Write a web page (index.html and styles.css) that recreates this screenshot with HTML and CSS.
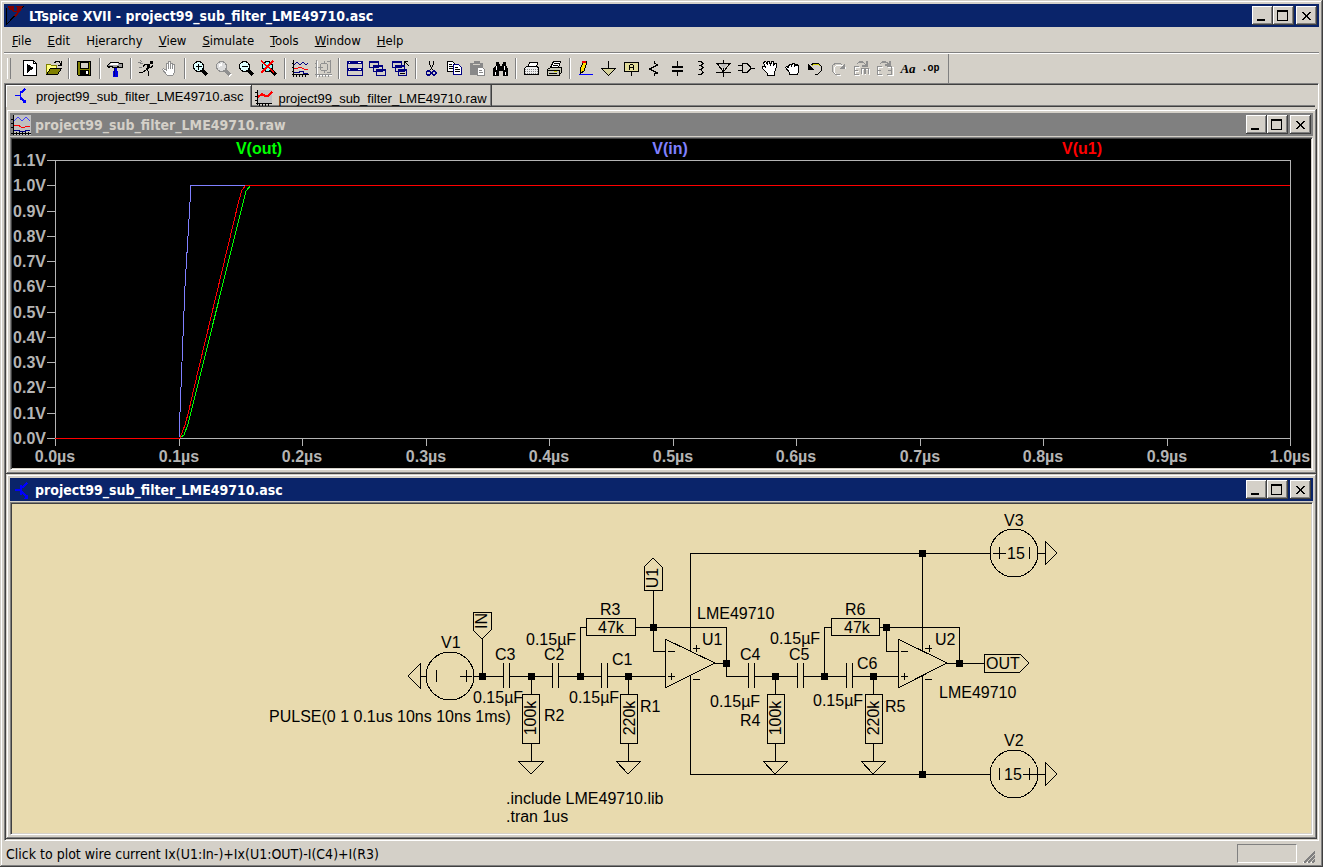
FILE: index.html
```html
<!DOCTYPE html>
<html lang="en">
<head>
    <meta charset="UTF-8">
    <meta name="viewport" content="width=device-width, initial-scale=1.0">
    <title>LTspice XVII - project99_sub_filter_LME49710.asc</title>
    <link rel="stylesheet" href="styles.css">
</head>
<body>
<div class="app">
    <header class="titlebar">
        <svg class="app-icon" width="20" height="21" viewBox="0 0 20 21"><path d="M1 3V20L19 1" fill="none" stroke="#000"/><path d="M3 1h6v2h2V1h7l-2 4-5 7-2-1 3-4H8L6 5H4z" fill="#800000"/><path d="M9 2h3v4H9z" fill="#0a246a"/></svg>
        <h1>LTspice XVII - project99_sub_filter_LME49710.asc</h1>
        <div class="win-buttons">
            <button aria-label="Minimize"><svg width="15" height="13"><path d="M2 10h8v2H2z"/></svg></button>
            <button aria-label="Maximize"><svg width="15" height="13"><path d="M1 1h11v11H1zM2 3v8h9V3z" fill-rule="evenodd"/></svg></button>
            <button class="close" aria-label="Close"><svg width="15" height="13"><path d="M3 3h2v1h1v1h1v1h1V5h1V4h1V3h2v1h-1v1h-1v1H9v2h1v1h1v1h1v1h-2v-1H9V9H8V8H7v1H6v1H5v1H3v-1h1V9h1V8h1V6H5V5H4V4H3z"/></svg></button>
        </div>
    </header>

    <nav class="menu">
        <button><u>F</u>ile</button>
        <button><u>E</u>dit</button>
        <button>H<u>i</u>erarchy</button>
        <button><u>V</u>iew</button>
        <button><u>S</u>imulate</button>
        <button><u>T</u>ools</button>
        <button><u>W</u>indow</button>
        <button><u>H</u>elp</button>
    </nav>

    <div class="toolbar">
        <div class="group">
            <button aria-label="New schematic"><svg class="icon" viewBox="0 0 18 18"><path d="M1.5.5h10l3 3v12h-13z" fill="#fff" stroke="#000"/><path d="M11.5.5v3h3" fill="none" stroke="#000"/><path d="M5 4l7 4-7 5z"/></svg></button>
            <button aria-label="Open"><svg class="icon" viewBox="0 0 18 18"><path d="M1.5 14.5v-10h4l1 1h5v3" fill="#ffff80" stroke="#808000"/><path d="M1.5 14.5l4-6h11l-4 6z" fill="#808000" stroke="#000"/><path d="M9 2.500h1l1-1h3l2 3M16.500 1v4h-4" fill="none" stroke="#000"/></svg></button>
        </div>
        <div class="group">
            <button aria-label="Save"><svg class="icon" viewBox="0 0 18 18"><path d="M1.5 1.5h13v14h-12l-1-1z" fill="#808000" stroke="#000"/><path d="M4 2h8v6H4z" fill="#d4d0c8" stroke="#000"/><path d="M4 10h9v5H4z"/><path d="M10 11h2v3h-2z" fill="#fff"/></svg></button>
        </div>
        <div class="group">
            <button aria-label="Control panel"><svg class="icon" viewBox="0 0 18 18"><path d="M.5 5.500l3-3h8l1 1h3v4h-3l-2-1v1h-5v-1h-2l-2 1z" fill="#a0a0a0" stroke="#000"/><path d="M4 3h7v2H3z" fill="#fff"/><path d="M7 8h3v3h1v6H6v-6h1z" fill="#0000e0"/><path d="M7 8h1v8h-1z" fill="#000080"/></svg></button>
        </div>
        <div class="group">
            <button aria-label="Run"><svg class="icon" viewBox="0 0 18 18"><path d="M12 1h3v3h-3z"/><path d="M9 4h3v3l-2 3H8l1-3z"/><path d="M10 4.500H7l-2 2M11 7.500h2l2-2M8 9.500l3 2-1 4.500M8 10l-3 2H1" fill="none" stroke="#000"/><path d="M0 2l5 2M1 7h3M2 0l2 2" fill="none" stroke="#808080"/></svg></button>
            <button aria-label="Halt"><svg class="icon" viewBox="0 0 18 18"><path d="M6.500 15.500l-5-6 1-1 3 2v-7h2v-2h2v2h2v1h2v8l-2 3z" fill="#fff" stroke="#909090"/><path d="M7.500 3v6M9.500 3v6M11.500 4v5" stroke="#909090"/></svg></button>
        </div>
        <div class="group">
            <button aria-label="Zoom area"><svg class="icon" viewBox="0 0 18 18"><circle cx="6.500" cy="6.500" r="5" fill="#dff" stroke="#000"/><path d="M4 6.500h6M6.500 4v6" stroke="#000" stroke-width="1.500"/><path d="M10 10l5 5" stroke="#000" stroke-width="3"/></svg></button>
            <button aria-label="Pan"><svg class="icon" viewBox="0 0 18 18"><path d="M11 11l5 5" stroke="#fff" stroke-width="3"/><circle cx="6.500" cy="6.500" r="5" fill="#ddd" stroke="#909090"/><path d="M4 6l3-2" stroke="#fff" stroke-width="2"/><path d="M10 10l5 5" stroke="#909090" stroke-width="3"/></svg></button>
            <button aria-label="Zoom back"><svg class="icon" viewBox="0 0 18 18"><circle cx="6.500" cy="6.500" r="5" fill="#dff" stroke="#000"/><path d="M4 6.500h6" stroke="#000" stroke-width="1.500"/><path d="M10 10l5 5" stroke="#000" stroke-width="3"/></svg></button>
            <button aria-label="Zoom to fit"><svg class="icon" viewBox="0 0 18 18"><circle cx="6.500" cy="6.500" r="5" fill="#8ff" stroke="#000"/><path d="M10 10l5 5" stroke="#000" stroke-width="3"/><path d="M0 1l13 11M12 1L0 13" stroke="#f00" stroke-width="1.500"/></svg></button>
        </div>
        <div class="group">
            <button aria-label="Autorange"><svg class="icon" viewBox="0 0 18 18"><path d="M1.5 0v17M0 14.500h17M4.500 14v3M7.500 14v3M10.500 14v3M13.500 14v3M0 3.500h2M0 7.500h2M0 11.500h2" stroke="#000"/><path d="M2 5l3-3 3 3 3-3 3 3 2-2M2 12h5v-1h4v2h5" fill="none" stroke="#000080"/><path d="M2 8h4l2-1 4 2h4" fill="none" stroke="#f00"/></svg></button>
            <button aria-label="Plot settings"><svg class="icon" viewBox="0 0 18 18"><path d="M2.500 1v17M1 15.500h16" stroke="#fff"/><path d="M1.5 0v17M0 14.500h17M4.500 14v3M7.500 14v3M10.500 14v3M13.500 14v3M0 3.500h2M0 7.500h2M15.500 0v13M12 1.500h4M12 12.500h4" stroke="#909090"/><circle cx="9" cy="7" r="4" fill="none" stroke="#909090"/><path d="M3 7h5M9 1v3M9 10v3" stroke="#909090"/></svg></button>
        </div>
        <div class="group">
            <button aria-label="Tile"><svg class="icon" viewBox="0 0 18 18"><path d="M1.5 1.5h15v14h-15z" fill="#d4d0c8" stroke="#000080"/><path d="M1 1h16v3H1zM1 8h16v3H1z" fill="#000080"/><path d="M3 2h1v1H3zM12 2h3v1h-3zM3 9h1v1H3zM12 9h3v1h-3z" fill="#fff"/></svg></button>
            <button aria-label="Cascade"><svg class="icon" viewBox="0 0 18 18"><path d="M.5 1.500h9v6h-9zM4.500 5.500h9v6h-9zM7.500 9.500h9v6h-9z" fill="#d4d0c8" stroke="#000080"/><path d="M0 1h10v2H0zM4 5h10v2H4zM7 9h10v2H7z" fill="#000080"/></svg></button>
            <button aria-label="Close all"><svg class="icon" viewBox="0 0 18 18"><path d="M.5 1.500h9v6h-9zM3.500 5.500h9v6h-9zM6.500 9.500h8v6h-8z" fill="#d4d0c8" stroke="#000080"/><path d="M0 1h10v2H0zM3 5h10v2H3zM6 9h9v2H6z" fill="#000080"/><path d="M12.500 5V1.500H16M13 2l4 4M8 13h5" fill="none" stroke="#000"/></svg></button>
        </div>
        <div class="group">
            <button aria-label="Cut"><svg class="icon" viewBox="0 0 18 18"><path d="M6.500 1v3l3 6M10.500 1v3l-3 6" fill="none" stroke="#000"/><circle cx="5.500" cy="13" r="2" fill="none" stroke="#000080" stroke-width="1.500"/><circle cx="11" cy="13" r="2" fill="none" stroke="#000080" stroke-width="1.500"/></svg></button>
            <button aria-label="Copy"><svg class="icon" viewBox="0 0 18 18"><path d="M1.5 1.5h5l3 3v7h-8z" fill="#fff" stroke="#000"/><path d="M7.500 4.500h5l3 3v7h-8z" fill="#fff" stroke="#000080"/><path d="M3 4.500h3M3 6.500h4M3 8.500h4M9 7.500h3M9 9.500h5M9 11.500h5" stroke="#000"/></svg></button>
            <button aria-label="Paste"><svg class="icon" viewBox="0 0 18 18"><path d="M1 3h4V1h6v2h3v12H1z" fill="#888"/><path d="M4 4h7" stroke="#d4d0c8"/><path d="M8.500 7.500h5l2 2v6h-7z" fill="#fff" stroke="#888"/><path d="M10 10.500h3M10 12.500h4" stroke="#888"/></svg></button>
            <button aria-label="Find"><svg class="icon" viewBox="0 0 18 18"><path d="M4 2h3v2h1v2h2V4h1V2h3v3l2 4v7h-5v-5H7v5H1V9l3-4z"/><path d="M4 6h1v4H4zM12 6h1v4h-1zM3 12h1v3H3zM13 12h1v3h-1z" fill="#fff"/></svg></button>
        </div>
        <div class="group">
            <button aria-label="Print preview"><svg class="icon" viewBox="0 0 18 18"><path d="M4.500 8.500l2-6h8l-1 6" fill="#fff" stroke="#000"/><path d="M1.5 8.500l2-2h11l1 2v6h-14z" fill="#eee" stroke="#000"/><path d="M2 9.500h13M2 11.500h13M2 13.500h13" stroke="#888" stroke-dasharray="1 1"/></svg></button>
            <button aria-label="Print"><svg class="icon" viewBox="0 0 18 18"><path d="M4.500 7.500l3-6h7l-2 6" fill="#fff" stroke="#000"/><path d="M8 3.500h5M7 5.500h5" stroke="#000"/><path d="M1.5 9.500l3-2h11v5l-3 3h-11z" fill="#c8c8b8" stroke="#000"/><path d="M1 10.500h12v5M3 13.500h8" fill="none" stroke="#000"/><path d="M8 11h3v1H8z" fill="#cc0"/></svg></button>
        </div>
        <div class="group">
            <button aria-label="Wire"><svg class="icon" viewBox="0 0 18 18"><path d="M3 10l3-8 2-1 2 1-3 9-4 3z" fill="#ffe000" stroke="#000"/><path d="M5 1h4v2H5z" fill="#e00"/><path d="M2 14.500h14" stroke="#00f"/></svg></button>
            <button aria-label="Ground"><svg class="icon" viewBox="0 0 18 18"><path d="M8.500 1v7" stroke="#000"/><path d="M1.5 8.500h14l-7 7z" fill="#d6d29a" stroke="#000"/></svg></button>
            <button aria-label="Label net"><svg class="icon" viewBox="0 0 18 18"><path d="M1.5 2.500h14v9h-14z" fill="#e2dc9a" stroke="#000" stroke-width="1.500"/><path d="M6.500 10V5.500l1-1h2l1 1V10M6 7.500h4M8.500 12v4" fill="none" stroke="#000"/></svg></button>
            <button aria-label="Resistor"><svg class="icon" viewBox="0 0 18 18"><path d="M8.500 1v2l3 2-8 4 8 4-3 1v2" fill="none" stroke="#000"/></svg></button>
            <button aria-label="Capacitor"><svg class="icon" viewBox="0 0 18 18"><path d="M8.500 1v6M8.500 11v5" stroke="#000"/><path d="M3 7h11M3 11h11" stroke="#000" stroke-width="2"/></svg></button>
            <button aria-label="Inductor"><svg class="icon" viewBox="0 0 18 18"><path d="M6 1.500h3l2 2-2 2H7h2l2 2-2 2H7h2l2 3-2 2H6" fill="none" stroke="#000"/></svg></button>
            <button aria-label="Diode"><svg class="icon" viewBox="0 0 18 18"><path d="M8.500 0v17M1 3.500h15M1 12.500h15M2.500 4l6 8 6-8" fill="none" stroke="#000"/><path d="M5 4h7l-3 5z" fill="#bbb"/></svg></button>
            <button aria-label="Component"><svg class="icon" viewBox="0 0 18 18"><path d="M0 5.500h4M0 10.500h4M13 8.500h4" stroke="#000"/><path d="M4.500 3.500h4l4 3v3l-4 3h-4z" fill="#d4d0c8" stroke="#000" stroke-width="1.500"/></svg></button>
            <button aria-label="Move"><svg class="icon" viewBox="0 0 18 18"><path d="M6.500 15.500v-2l-5-5v-2h2l1 1-2-5 2-1 2 3v-3h2l1 4 1-4h2v4l1-2h2v3l-2 6v3z" fill="#fff" stroke="#000"/></svg></button>
            <button aria-label="Drag"><svg class="icon" viewBox="0 0 18 18"><path d="M5.500 14.500v-2l-4-5 1-1 2 1v-2l2-1 1 1 1-2h2l1 2 2-1 1 2v5l-1 3z" fill="#fff" stroke="#000"/><path d="M7.500 5v2M10.500 5v2" stroke="#000"/></svg></button>
            <button aria-label="Undo"><svg class="icon" viewBox="0 0 18 18"><path d="M4 5l3-2h4l3 3v5l-3 3H8" fill="none" stroke="#000"/><path d="M5 6l2-2h4l2 2" fill="none" stroke="#cc0"/><path d="M1 4v6h6z"/></svg></button>
            <button aria-label="Redo"><svg class="icon" viewBox="0 0 18 18"><path d="M16 9l-3-4H7L4 8v4l3 3h4" fill="none" stroke="#fff"/><path d="M12 5l-2-2H6L2 6v5l3 3h5" fill="none" stroke="#909090"/><path d="M15 3v6H9z" fill="#909090"/></svg></button>
            <button aria-label="Rotate"><svg class="icon" viewBox="0 0 18 18"><path d="M7 7.500H2v8h5M2 11.500h4M9 15V9.500h7V15M12.500 10v5" fill="none" stroke="#fff"/><path d="M6 6.500H1.500v8H6M1 10.500h4M8.500 14V8.500h7V14M12 9v5M4 4l2-2h4l3 3M14 1v5H9" fill="none" stroke="#909090" stroke-width="1.300"/></svg></button>
            <button aria-label="Mirror"><svg class="icon" viewBox="0 0 18 18"><path d="M7 7.500H2v8h5M12 7.500h5v8h-5" fill="none" stroke="#fff"/><path d="M6 6.500H1.500v8H6M1 10.500h4M11 6.500h4.500v8H11M12 10.500h4M4 4l2-2h4l3 2M14 1v4H9" fill="none" stroke="#909090" stroke-width="1.300"/></svg></button>
            <button class="txt-aa">Aa</button>
            <button class="txt-op">.op</button>
        </div>
    </div>

    <main class="mdi">
        <div class="tabs">
            <button class="tab active"><svg class="icon" viewBox="0 0 18 18"><path d="M2 8.500h5M7.500 4v9M8 6l4-4M8 11l4 4" fill="none" stroke="#00f" stroke-width="1.500"/><path d="M13 12v4H9z" fill="#00f"/></svg>project99_sub_filter_LME49710.asc</button>
            <button class="tab"><svg class="icon" viewBox="0 0 18 18"><path d="M2 1h15v13H2z" fill="#c0c0c0"/><path d="M2.500 1v15M1 14.500h16M4.500 14v3M7.500 14v3M10.500 14v3M13.500 14v3M0 3.500h3M0 7.500h3M0 11.500h3" stroke="#000"/><path d="M3 8l4-3 3 2h3l4-4" fill="none" stroke="#f00" stroke-width="2"/></svg>project99_sub_filter_LME49710.raw</button>
        </div>

        <section class="window">
            <header class="titlebar inactive">
                <svg class="app-icon" width="20" height="20" viewBox="0 0 20 20"><path d="M2 0h18v20H2z" fill="#c0c0c0"/><path d="M2.500 0v20M0 18.500h20M5.500 17v3M8.500 17v3M11.500 17v3M14.500 17v3M17.500 17v3M0 4.500h3M0 8.500h3M0 12.500h3" stroke="#000"/><path d="M3 6l4-4 4 4 4-4 4 4" fill="none" stroke="#4040ff"/><path d="M3 10h4l3 2h4l5-1" fill="none" stroke="#f00"/><path d="M3 15h5v1h6v-1h5" fill="none" stroke="#000080"/></svg>
                <h2>project99_sub_filter_LME49710.raw</h2>
                <div class="win-buttons">
                    <button aria-label="Minimize"><svg width="15" height="13"><path d="M2 10h8v2H2z"/></svg></button>
                    <button aria-label="Maximize"><svg width="15" height="13"><path d="M1 1h11v11H1zM2 3v8h9V3z" fill-rule="evenodd"/></svg></button>
                    <button class="close" aria-label="Close"><svg width="15" height="13"><path d="M3 3h2v1h1v1h1v1h1V5h1V4h1V3h2v1h-1v1h-1v1H9v2h1v1h1v1h1v1h-2v-1H9V9H8V8H7v1H6v1H5v1H3v-1h1V9h1V8h1V6H5V5H4V4H3z"/></svg></button>
                </div>
            </header>
            <div class="client plot">
                <svg viewBox="12 139 1299 329" aria-label="Waveforms">
                    <g class="axis">
                        <path d="M55 160H1290V438H55z"/>
                        <path d="M47 160h8M47 185h8M47 211h8M47 236h8M47 261h8M47 286h8M47 312h8M47 337h8M47 362h8M47 387h8M47 413h8M47 438h8"/>
                        <path d="M55 438v8M179 438v8M302 438v8M426 438v8M549 438v8M673 438v8M796 438v8M920 438v8M1043 438v8M1167 438v8M1290 438v8"/>
                    </g>
                    <g class="y-labels">
                        <text x="46" y="166">1.1V</text>
                        <text x="46" y="191">1.0V</text>
                        <text x="46" y="217">0.9V</text>
                        <text x="46" y="242">0.8V</text>
                        <text x="46" y="267">0.7V</text>
                        <text x="46" y="292">0.6V</text>
                        <text x="46" y="318">0.5V</text>
                        <text x="46" y="343">0.4V</text>
                        <text x="46" y="368">0.3V</text>
                        <text x="46" y="393">0.2V</text>
                        <text x="46" y="419">0.1V</text>
                        <text x="46" y="444">0.0V</text>
                    </g>
                    <g class="x-labels">
                        <text x="55" y="462">0.0µs</text>
                        <text x="179" y="462">0.1µs</text>
                        <text x="302" y="462">0.2µs</text>
                        <text x="426" y="462">0.3µs</text>
                        <text x="549" y="462">0.4µs</text>
                        <text x="673" y="462">0.5µs</text>
                        <text x="796" y="462">0.6µs</text>
                        <text x="920" y="462">0.7µs</text>
                        <text x="1043" y="462">0.8µs</text>
                        <text x="1167" y="462">0.9µs</text>
                        <text x="1290" y="462">1.0µs</text>
                    </g>
                    <text class="t-out" x="259" y="154">V(out)</text>
                    <text class="t-in" x="670" y="154">V(in)</text>
                    <text class="t-u1" x="1082" y="154">V(u1)</text>
                    <path class="trace out" d="M55 438H180L184 435 188 424 194 400 242 207 246 191 251 185H1290"/>
                    <path class="trace in" d="M55 438H179L182 362 185 286 188 236 191 185H1290"/>
                    <path class="trace u1" d="M55 438H180L185 425 189 410 194 388 239 200 242 190 246 185H1290"/>
                </svg>
            </div>
        </section>

        <section class="window">
            <header class="titlebar">
                <svg class="app-icon" width="20" height="20" viewBox="0 0 20 20"><path d="M4 10h5M10 5v10M11 8l5-5M11 12l5 5" fill="none" stroke="#00f" stroke-width="2"/><path d="M17 14v5h-5z" fill="#00f"/></svg>
                <h2>project99_sub_filter_LME49710.asc</h2>
                <div class="win-buttons">
                    <button aria-label="Minimize"><svg width="15" height="13"><path d="M2 10h8v2H2z"/></svg></button>
                    <button aria-label="Maximize"><svg width="15" height="13"><path d="M1 1h11v11H1zM2 3v8h9V3z" fill-rule="evenodd"/></svg></button>
                    <button class="close" aria-label="Close"><svg width="15" height="13"><path d="M3 3h2v1h1v1h1v1h1V5h1V4h1V3h2v1h-1v1h-1v1H9v2h1v1h1v1h1v1h-2v-1H9V9H8V8H7v1H6v1H5v1H3v-1h1V9h1V8h1V6H5V5H4V4H3z"/></svg></button>
                </div>
            </header>
            <div class="client schematic">
                <svg viewBox="12 504 1299 329" aria-label="Schematic">
                    <!-- wires -->
                    <path d="M420 676h6M474 676H503M509 676H552M558 676H601M607 676H665M482 639V676M531 676V694M531 743V761M628 676V694M628 743V761M580 676V627H586M635 627H726V676H748M653 590V651H665M715 663H726"/>
                    <path d="M754 676H797M803 676H846M852 676H898M775 676V694M775 743V761M873 676V694M873 743V761M824 676V627H831M879 627H959V663M886 627V651H898M947 663H984"/>
                    <path d="M690 651V553H990M690 676V774H990M922 553V651M922 676V774M1038 553H1045M1038 774H1045"/>
                    <!-- capacitors -->
                    <path d="M503 663V688M509 663V688M552 663V688M558 663V688M601 663V688M607 663V688M748 663V688M754 663V688M797 663V688M803 663V688M846 663V688M852 663V688"/>
                    <!-- resistors -->
                    <path d="M522 694H539V743H522zM620 694H637V743H620zM767 694H784V743H767zM865 694H882V743H865zM586 618H635V635H586zM831 618H879V635H831z"/>
                    <!-- grounds -->
                    <path d="M518 761H544L531 774zM616 761H641L628 774zM763 761H788L775 774zM861 761H886L873 774zM420 664V688L408 676zM1045 541V565L1057 553zM1045 762V786L1057 774z"/>
                    <!-- op amps -->
                    <path d="M665 639V688L715 663zM898 639V688L947 663z"/>
                    <path d="M668 651h7M668 676h7M671 673v7M693 648h7M696 645v7M693 679h7M901 651h7M901 676h7M904 673v7M925 648h7M929 645v7M925 679h7"/>
                    <!-- sources -->
                    <circle cx="450" cy="676" r="24"/>
                    <circle cx="1014" cy="553" r="24"/>
                    <circle cx="1014" cy="774" r="24"/>
                    <path d="M436 670V682M460 676H472M466 670V682M993 553H1006M999 547V559M1029 547V559M999 768V780M1023 774H1038M1029 768V780"/>
                    <!-- net labels -->
                    <path d="M473 612H491V630L482 639 473 630zM644 590H662V567L653 558 644 567zM984 654H1020L1029 663 1020 672H984z"/>
                    <g class="nodes">
                        <path d="M479 673h6v6h-6zM528 673h6v6h-6zM577 673h6v6h-6zM625 673h6v6h-6zM650 624h6v6h-6zM723 660h6v6h-6z"/>
                        <path d="M772 673h6v6h-6zM821 673h6v6h-6zM870 673h6v6h-6zM883 624h6v6h-6zM956 660h6v6h-6zM919 550h6v6h-6zM919 771h6v6h-6z"/>
                    </g>
                    <text x="441" y="648">V1</text>
                    <text x="495" y="660">C3</text>
                    <text x="526" y="645">0.15µF</text>
                    <text x="544" y="660">C2</text>
                    <text x="473" y="703">0.15µF</text>
                    <text x="544" y="721">R2</text>
                    <text x="600" y="615">R3</text>
                    <text x="598" y="633">47k</text>
                    <text x="612" y="665">C1</text>
                    <text x="569" y="703">0.15µF</text>
                    <text x="640" y="712">R1</text>
                    <text x="697" y="619">LME49710</text>
                    <text x="702" y="645">U1</text>
                    <text x="740" y="660">C4</text>
                    <text x="770" y="644">0.15µF</text>
                    <text x="789" y="660">C5</text>
                    <text x="710" y="707">0.15µF</text>
                    <text x="740" y="726">R4</text>
                    <text x="845" y="615">R6</text>
                    <text x="844" y="633">47k</text>
                    <text x="857" y="669">C6</text>
                    <text x="813" y="706">0.15µF</text>
                    <text x="885" y="712">R5</text>
                    <text x="935" y="645">U2</text>
                    <text x="939" y="698">LME49710</text>
                    <text x="986" y="669">OUT</text>
                    <text x="1004" y="526">V3</text>
                    <text x="1007" y="559">15</text>
                    <text x="1004" y="746">V2</text>
                    <text x="1004" y="780">15</text>
                    <text x="269" y="722">PULSE(0 1 0.1us 10ns 10ns 1ms)</text>
                    <text x="506" y="804">.include LME49710.lib</text>
                    <text x="506" y="822">.tran 1us</text>
                    <g class="upright">
                        <text transform="translate(536 718) rotate(-90)">100k</text>
                        <text transform="translate(635 718) rotate(-90)">220k</text>
                        <text transform="translate(781 718) rotate(-90)">100k</text>
                        <text transform="translate(879 718) rotate(-90)">220k</text>
                        <text transform="translate(487 621) rotate(-90)">IN</text>
                        <text transform="translate(658 578) rotate(-90)">U1</text>
                    </g>
                </svg>
            </div>
        </section>
    </main>

    <footer class="status">
        <span>Click to plot wire current Ix(U1:In-)+Ix(U1:OUT)-I(C4)+I(R3)</span>
        <div class="pane"></div>
        <svg class="grip" width="13" height="13"><path d="M1 13L13 1M5 13l8-8M9 13l4-4" stroke="#fff"/><path d="M2 13L13 2M6 13l7-7M10 13l3-3" stroke="#808080" stroke-width="2"/></svg>
    </footer>
</div>
</body>
</html>
```
FILE: styles.css
```css
* {
    padding: 0;
    margin: 0;
    box-sizing: border-box;
}

body {
    background-color: #d4d0c8;
    color: #000;
    font-family: "DejaVu Sans Condensed", "DejaVu Sans", sans-serif;
    font-size: 14px;
}

button {
    border: none;
    background: none;
    color: inherit;
    font: inherit;
}

svg {
    display: block;
    shape-rendering: crispEdges;
}

.app {
    display: flex;
    flex-direction: column;
    min-height: 100vh;
    padding: 4px;
    box-shadow: inset -1px -1px #404040, inset 1px 1px #d4d0c8, inset -2px -2px #808080, inset 2px 2px #fff;
}

/* title bars */
.titlebar {
    display: flex;
    align-items: center;
    height: 23px;
    padding-right: 2px;
    background-color: #0a246a;
    color: #fff;
}

.titlebar.inactive {
    background-color: #808080;
    color: #d4d0c8;
}

.titlebar h1,
.titlebar h2 {
    flex: 1;
    font-size: 14px;
    font-weight: bold;
    white-space: nowrap;
}

.app-icon {
    margin: 0 4px 0 1px;
}

.win-buttons {
    display: flex;
}

.win-buttons button {
    width: 21px;
    height: 19px;
    padding: 2px 3px;
    background-color: #d4d0c8;
    box-shadow: inset -1px -1px #404040, inset 1px 1px #fff, inset -2px -2px #808080;
}

.win-buttons .close {
    margin-left: 2px;
}

/* menu */
.menu {
    display: flex;
    height: 27px;
    border-bottom: 1px solid #fff;
    box-shadow: inset 0 -1px #808080;
}

.menu button {
    padding: 0 8px;
    font-size: 13px;
}

/* toolbar */
.toolbar {
    display: flex;
    align-self: flex-start;
    height: 29px;
    padding: 0 6px 0 3px;
    border-right: 1px solid #808080;
}

.toolbar::before {
    content: "";
    width: 2px;
    margin: 4px 8px 4px 0;
    border-left: 1px solid #fff;
    border-right: 1px solid #808080;
}

.group {
    display: flex;
    position: relative;
}

.group + .group {
    margin-left: 8px;
}

.group + .group::before {
    content: "";
    position: absolute;
    left: -5px;
    top: 4px;
    bottom: 4px;
    border-left: 1px solid #808080;
    border-right: 1px solid #fff;
}

.toolbar button {
    width: 23px;
    padding: 5px 2px 5px 3px;
}

.icon {
    width: 18px;
    height: 18px;
    flex: none;
}

.toolbar .txt-aa {
    font: italic bold 13px "Liberation Serif", serif;
}

.toolbar .txt-op {
    padding: 0;
    font: bold 10px "Liberation Mono", monospace;
}

/* document area */
.mdi {
    display: flex;
    flex: 1;
    flex-direction: column;
    border: 1px solid;
    border-color: #808080 #fff #fff #808080;
    padding: 1px;
    box-shadow: inset 1px 1px #404040;
}

.tabs {
    display: flex;
    height: 24px;
    padding-bottom: 2px;
    font-family: "Liberation Sans", Arial, sans-serif;
    font-size: 13px;
}

.tabs::after {
    content: "";
    flex: 1;
    margin-right: 2px;
    border-bottom: 1px solid #404040;
    box-shadow: inset 0 -1px #808080;
}

.tab {
    display: flex;
    align-items: center;
    gap: 5px;
    padding: 5px 4px 0 3px;
    border-right: 1px solid #404040;
    border-bottom: 1px solid #404040;
    box-shadow: inset -1px -1px #808080;
}

.tab.active {
    padding: 0 8px 0 7px;
    border-bottom: none;
    box-shadow: inset 1px 1px #fff, inset -1px 0 #808080;
}

.window {
    display: flex;
    flex: 1;
    flex-direction: column;
    padding: 4px;
    background-color: #d4d0c8;
    box-shadow: inset -1px -1px #404040, inset 1px 1px #d4d0c8, inset -2px -2px #808080, inset 2px 2px #fff;
}

.client {
    flex: 1;
    margin-top: 1px;
    border: 1px solid;
    border-color: #808080 #fff #fff #808080;
    padding: 1px;
    box-shadow: inset 1px 1px #404040, inset -1px -1px #d4d0c8;
}

.client svg {
    width: 100%;
    height: 100%;
    font-family: "Liberation Sans", Arial, sans-serif;
    font-size: 16px;
}

/* waveforms */
.plot svg {
    background-color: #000;
    fill: #b4b4b4;
    font-weight: bold;
    text-anchor: middle;
}

.axis {
    fill: none;
    stroke: #b4b4b4;
}

.y-labels {
    text-anchor: end;
}

.trace {
    fill: none;
}

.t-out { fill: #00ff00; }
.t-in { fill: #8080ff; }
.t-u1 { fill: #ff0000; }
.trace.out { stroke: #00ff00; }
.trace.in { stroke: #8080ff; }
.trace.u1 { stroke: #ff0000; }

/* schematic */
.schematic svg {
    background-color: #e8daae;
}

.schematic path,
.schematic circle {
    fill: none;
    stroke: #000;
}

.schematic .nodes path {
    fill: #000;
}

.upright {
    text-anchor: middle;
}

/* status bar */
.status {
    display: flex;
    align-items: center;
    height: 22px;
    padding: 3px 0 0 2px;
}

.status span {
    flex: 1;
}

.pane {
    width: 60px;
    height: 19px;
    border: 1px solid;
    border-color: #808080 #fff #fff #808080;
}

.grip {
    align-self: flex-end;
    margin: 0 4px 0 5px;
}
```
